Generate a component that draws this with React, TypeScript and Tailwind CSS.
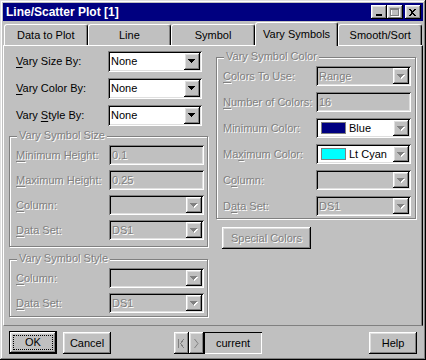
import React from "react";

const raised =
  "shadow-[inset_-1px_-1px_0_#000,inset_1px_1px_0_#fff,inset_-2px_-2px_0_#808080,inset_2px_2px_0_#dfdfdf]";
const sunken =
  "shadow-[inset_1px_1px_0_#808080,inset_-1px_-1px_0_#fff,inset_2px_2px_0_#000,inset_-2px_-2px_0_#dfdfdf]";
const dis = "text-[#808080] [text-shadow:1px_1px_0_#fff]";

function Label({ text, u, disabled }: { text: string; u?: number; disabled?: boolean }) {
  return (
    <span className={`flex-1 whitespace-pre ${disabled ? dis : "text-black"}`}>
      {u === undefined ? (
        text
      ) : (
        <>
          {text.slice(0, u)}
          <span className="underline underline-offset-[2px]">{text[u]}</span>
          {text.slice(u + 1)}
        </>
      )}
    </span>
  );
}

function Arrow({ disabled }: { disabled?: boolean }) {
  return (
    <div className={`w-[16px] h-full bg-[#c0c0c0] ${raised} flex items-center justify-center`}>
      <svg width="8" height="5" viewBox="0 0 8 5" shapeRendering="crispEdges">
        {disabled && (
          <g fill="#fff">
            <rect x="1" y="1" width="7" height="1" />
            <rect x="2" y="2" width="5" height="1" />
            <rect x="3" y="3" width="3" height="1" />
            <rect x="4" y="4" width="1" height="1" />
          </g>
        )}
        <g fill={disabled ? "#808080" : "#000"}>
          <rect x="0" y="0" width="7" height="1" />
          <rect x="1" y="1" width="5" height="1" />
          <rect x="2" y="2" width="3" height="1" />
          <rect x="3" y="3" width="1" height="1" />
        </g>
      </svg>
    </div>
  );
}

function Field({
  value,
  disabled,
  select,
  white,
  swatch,
  w = "w-[95px]",
  h = "h-[20px]",
}: {
  value?: string;
  disabled?: boolean;
  select?: boolean;
  white?: boolean;
  swatch?: string;
  w?: string;
  h?: string;
}) {
  return (
    <div className={`${w} ${h} ${sunken} ${white ? "bg-white" : "bg-[#c0c0c0]"} p-[2px] flex items-stretch`}>
      <div className="flex-1 flex items-center pl-[1px] overflow-hidden">
        {swatch && <span className={`w-[25px] h-[12px] ml-[2px] mr-[3px] border border-[#808080] ${swatch}`} />}
        {value && <span className={disabled ? dis : "text-black"}>{value}</span>}
      </div>
      {select && <Arrow disabled={disabled || !!swatch} />}
    </div>
  );
}

function Row({ children }: { children: React.ReactNode }) {
  return <div className="flex items-center">{children}</div>;
}

function Group({ title, className, children }: { title: string; className: string; children: React.ReactNode }) {
  return (
    <div className={`relative border border-[#808080] shadow-[1px_1px_0_#fff,inset_1px_1px_0_#fff] ${className}`}>
      <span className={`absolute -top-[8px] left-[7px] bg-[#c0c0c0] px-[2px] leading-[13px] ${dis}`}>{title}</span>
      {children}
    </div>
  );
}

function Tab({ label, active }: { label: string; active?: boolean }) {
  return (
    <div
      className={`flex-1 flex items-center justify-center bg-[#c0c0c0] rounded-t-[3px] border-t border-l border-t-white border-l-white border-r border-r-black shadow-[inset_-1px_0_0_#808080] ${
        active ? "h-[24px] relative z-10 -mb-[1px]" : "h-[21px] mt-[2px]"
      }`}
    >
      {label}
    </div>
  );
}

function Button({ label, disabled, def, w = "w-[48px]" }: { label: string; disabled?: boolean; def?: boolean; w?: string }) {
  if (def)
    return (
      <div className={`${w} h-[23px] border border-black`}>
        <div className={`h-full ${raised} flex items-center justify-center p-[3px]`}>
          <div className="w-full h-full border border-dotted border-black flex items-center justify-center">{label}</div>
        </div>
      </div>
    );
  return (
    <div className={`${w} h-[22px] ${raised} flex items-center justify-center ${disabled ? dis : ""}`}>{label}</div>
  );
}

function Caption({ kind }: { kind: "min" | "max" | "close" }) {
  return (
    <div className={`w-[16px] h-[14px] bg-[#c0c0c0] ${raised} flex items-center justify-center`}>
      <svg width="10" height="9" viewBox="0 0 10 9" shapeRendering="crispEdges">
        {kind === "min" && <rect x="2" y="6" width="6" height="2" fill="#000" />}
        {kind === "max" && (
          <g fill="none">
            <rect x="1.5" y="1.5" width="8" height="7" stroke="#fff" />
            <rect x="0.5" y="0.5" width="8" height="7" stroke="#808080" />
            <rect x="1" y="1" width="8" height="1" fill="#808080" />
          </g>
        )}
        {kind === "close" && (
          <g fill="#000">
            <path d="M1 1h2l1.5 2 1.5-2h2L5.5 4.5 8 8H6L4.5 6 3 8H1l2.5-3.5z" />
          </g>
        )}
      </svg>
    </div>
  );
}

export default function App() {
  return (
    <div
      className={`w-[426px] h-[360px] bg-[#c0c0c0] p-[3px] flex flex-col font-['Liberation_Sans',Arial,sans-serif] text-[11px] text-black shadow-[inset_-1px_-1px_0_#000,inset_1px_1px_0_#dfdfdf,inset_-2px_-2px_0_#808080,inset_2px_2px_0_#fff]`}
    >
      {/* title bar */}
      <div className="h-[18px] bg-[#000080] flex items-center pl-[3px] pr-[2px]">
        <span className="flex-1 text-white font-bold text-[12px]">Line/Scatter Plot [1]</span>
        <Caption kind="min" />
        <Caption kind="max" />
        <div className="w-[2px]" />
        <Caption kind="close" />
      </div>

      {/* tabs */}
      <div className="flex mt-[1px] px-[1px]">
        <Tab label="Data to Plot" />
        <Tab label="Line" />
        <Tab label="Symbol" />
        <Tab label="Vary Symbols" active />
        <Tab label="Smooth/Sort" />
      </div>

      {/* panel */}
      <div className="h-[281px] border-t border-l border-t-white border-l-white border-r border-r-black border-b border-b-[#808080] shadow-[inset_-1px_0_0_#808080] flex">
        {/* left column */}
        <div className="w-[199px] ml-[5px] pt-[5px] flex flex-col">
          <div className="flex flex-col gap-[6px] pl-[7px] pr-[6px]">
            <Row>
              <Label text="Vary Size By:" u={0} />
              <Field value="None" select white w="w-[94px]" h="h-[21px]" />
            </Row>
            <Row>
              <Label text="Vary Color By:" u={0} />
              <Field value="None" select white w="w-[94px]" h="h-[21px]" />
            </Row>
            <Row>
              <Label text="Vary Style By:" u={5} />
              <Field value="None" select white w="w-[94px]" h="h-[21px]" />
            </Row>
          </div>

          <Group title="Vary Symbol Size" className="mt-[10px] pt-[8px] pb-[6px] pl-[6px] pr-[3px] flex flex-col gap-[5px]">
            <Row>
              <Label text="Minimum Height:" u={0} disabled />
              <Field value="0.1" disabled />
            </Row>
            <Row>
              <Label text="Maximum Height:" u={0} disabled />
              <Field value="0.25" disabled />
            </Row>
            <Row>
              <Label text="Column:" u={0} disabled />
              <Field select disabled />
            </Row>
            <Row>
              <Label text="Data Set:" u={0} disabled />
              <Field value="DS1" select disabled />
            </Row>
          </Group>

          <Group title="Vary Symbol Style" className="mt-[12px] pt-[8px] pb-[3px] pl-[6px] pr-[3px] flex flex-col gap-[5px]">
            <Row>
              <Label text="Column:" u={0} disabled />
              <Field select disabled />
            </Row>
            <Row>
              <Label text="Data Set:" u={0} disabled />
              <Field value="DS1" select disabled />
            </Row>
          </Group>
        </div>

        {/* right column */}
        <div className="w-[200px] ml-[8px] pt-[11px] flex flex-col items-start">
          <Group title="Vary Symbol Color" className="w-[200px] pt-[8px] pb-[2px] pl-[6px] pr-[4px] flex flex-col gap-[6px]">
            <Row>
              <Label text="Colors To Use:" u={0} disabled />
              <Field value="Range" select disabled />
            </Row>
            <Row>
              <Label text="Number of Colors:" u={0} disabled />
              <Field value="16" disabled />
            </Row>
            <Row>
              <Label text="Minimum Color:" disabled />
              <Field value="Blue" select white swatch="bg-[#000080]" />
            </Row>
            <Row>
              <Label text="Maximum Color:" u={2} disabled />
              <Field value="Lt Cyan" select white swatch="bg-[#00ffff]" />
            </Row>
            <Row>
              <Label text="Column:" u={1} disabled />
              <Field select disabled />
            </Row>
            <Row>
              <Label text="Data Set:" u={1} disabled />
              <Field value="DS1" select disabled />
            </Row>
          </Group>
          <div className="mt-[8px] ml-[6px]">
            <Button label="Special Colors" disabled w="w-[89px]" />
          </div>
        </div>
      </div>

      {/* bottom bar */}
      <div className="flex items-start mt-[5px] pl-[6px] pr-[6px]">
        <Button label="OK" def />
        <div className="ml-[6px] mt-[1px]">
          <Button label="Cancel" />
        </div>
        <div className="ml-[63px] mt-[1px] flex">
          <div className={`w-[15px] h-[22px] ${raised} flex items-center justify-center`}>
            <svg width="7" height="9" viewBox="0 0 7 9" shapeRendering="crispEdges">
              <rect x="0" y="0" width="1" height="9" fill="#808080" />
              <path d="M6 0 L2.5 4.5 L6 9" fill="none" stroke="#808080" />
            </svg>
          </div>
          <div className={`w-[15px] h-[22px] ${raised} flex items-center justify-center`}>
            <svg width="5" height="9" viewBox="0 0 5 9">
              <path d="M0.5 0 L4 4.5 L0.5 9" fill="none" stroke="#808080" />
            </svg>
          </div>
          <div className="w-[58px] h-[22px] shadow-[inset_1px_1px_0_#000,inset_-1px_-1px_0_#fff] flex items-center justify-center">
            current
          </div>
        </div>
        <div className="ml-auto mt-[1px]">
          <Button label="Help" />
        </div>
      </div>
    </div>
  );
}
